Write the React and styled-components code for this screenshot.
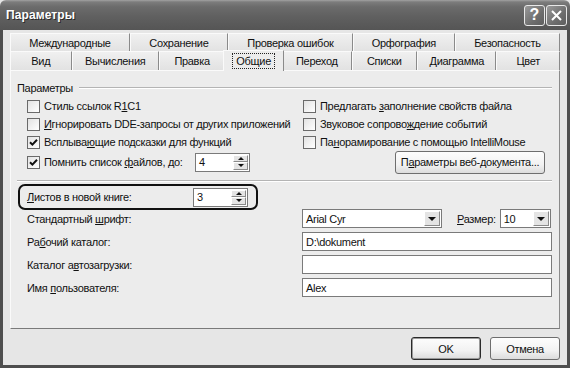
import React from 'react';
import styled, { createGlobalStyle } from 'styled-components';

const Global = createGlobalStyle`
  html, body { margin: 0; padding: 0; background: #e6e6e6; }
  body { font-family: "Liberation Sans", Arial, sans-serif; font-size: 11px; letter-spacing: -0.3px; color: #111; }
  #root { width: 570px; height: 368px; }
`;

const Window = styled.div`
  width: 570px;
  height: 368px;
  display: flex;
  flex-direction: column;
  background: #e6e6e6;
  overflow: hidden;
`;

const TitleBar = styled.div`
  height: 30px;
  flex: none;
  display: flex;
  align-items: center;
  justify-content: space-between;
  padding: 0 3px 0 6px;
  box-sizing: border-box;
  border-radius: 6px 6px 0 0;
  background: linear-gradient(#a2a2a2 0, #7c7c7c 2px, #6b6b6b 7px, #606060 55%, #555 100%);
`;

const Title = styled.div`
  color: #fff;
  font-weight: bold;
  font-size: 12px;
  letter-spacing: 0.1px;
  text-shadow: 1px 1px 0 #2a2a2a;
`;

const TitleButtons = styled.div`
  display: flex;
  gap: 1px;
`;

const TitleButton = styled.div`
  width: 21px;
  height: 21px;
  box-sizing: border-box;
  border: 1px solid #e8e8e8;
  border-radius: 3px;
  background: linear-gradient(135deg, #9a9a9a, #6e6e6e 60%, #5e5e5e);
  display: flex;
  align-items: center;
  justify-content: center;
  color: #fff;
  font-weight: bold;
  font-size: 16px;
  letter-spacing: 0;
`;

const Frame = styled.div`
  flex: 1;
  display: flex;
  flex-direction: column;
  border: 3px solid #4e4e4e;
  border-top: none;
  padding: 3px 7px 0 7px;
`;

const TabStrip = styled.div`
  display: flex;
  flex-direction: column;
`;

const TabRow = styled.div`
  display: flex;
  height: ${p => p.$h}px;
  align-items: flex-end;
  position: relative;
  z-index: ${p => (p.$front ? 2 : 1)};
`;

const Tab = styled.div`
  flex: ${p => p.$w} 1 0;
  height: ${p => (p.$active ? p.$h + 2 : p.$h)}px;
  margin: ${p => (p.$active ? '0 -2px -1px -2px' : '0')};
  box-sizing: border-box;
  display: flex;
  align-items: center;
  justify-content: center;
  border-top: 1px solid #fafafa;
  border-left: 1px solid #fafafa;
  border-right: 1px solid #8a8a8a;
  background: ${p => (p.$active ? '#ececec' : 'linear-gradient(#f0f0f0, #e2e2e2)')};
  white-space: nowrap;
  position: relative;
  z-index: ${p => (p.$active ? 3 : 1)};
`;

const TabLabel = styled.span`
  padding: 1px 3px;
  border: 1px dotted ${p => (p.$focus ? '#222' : 'transparent')};
`;

const Panel = styled.div`
  height: 259px;
  flex: none;
  box-sizing: border-box;
  border: 1px solid;
  border-color: #fafafa #8a8a8a #7a7a7a #fafafa;
  background: #ececec;
  display: flex;
  flex-direction: column;
  padding: 10px 7px 0 6px;
`;

const GroupHeader = styled.div`
  display: flex;
  align-items: center;
  height: 13px;
`;

const Rule = styled.div`
  flex: 1;
  height: 0;
  border-top: 1px solid #b4b4b4;
  border-bottom: 1px solid #fff;
  margin-left: ${p => p.$ml || 0}px;
`;

const CheckGrid = styled.div`
  display: grid;
  grid-template-columns: 276px 1fr;
  grid-template-rows: 18px 18px 18px 22px;
  margin-top: 3px;
  padding-left: 10px;
  align-items: center;
`;

const CheckItem = styled.label`
  display: flex;
  align-items: center;
  gap: 4px;
  white-space: nowrap;
`;

const Box = styled.span`
  width: 13px;
  height: 13px;
  box-sizing: border-box;
  border: 1px solid #6a6a6a;
  background: linear-gradient(135deg, #e2e2e2, #fff);
  display: inline-flex;
  align-items: center;
  justify-content: center;
  flex: none;
`;

const U = styled.span`
  text-decoration: underline;
`;

const SpinCell = styled.div`
  display: grid;
  grid-template-columns: ${p => p.$col}px 55px;
  align-items: center;
`;

const SpinWrap = styled.div`
  display: flex;
  width: 55px;
  height: 19px;
  box-sizing: border-box;
  border: 1px solid #7a7a7a;
  background: #fff;
`;

const SpinValue = styled.div`
  flex: 1;
  display: flex;
  align-items: center;
  padding-left: 3px;
`;

const SpinButtons = styled.div`
  width: 15px;
  display: flex;
  flex-direction: column;
  padding: 1px;
  box-sizing: content-box;
`;

const SpinBtn = styled.div`
  flex: 1;
  box-sizing: border-box;
  border: 1px solid;
  border-color: #fff #8a8a8a #8a8a8a #fff;
  background: #e4e4e4;
  display: flex;
  align-items: center;
  justify-content: center;
`;

const Arrow = styled.span`
  width: 0;
  height: 0;
  border-left: ${p => p.$s}px solid transparent;
  border-right: ${p => p.$s}px solid transparent;
  ${p => (p.$up ? `border-bottom: ${p.$s}px solid #111;` : `border-top: ${p.$s}px solid #111;`)}
`;

const PushButton = styled.div`
  width: ${p => p.$w}px;
  height: 23px;
  box-sizing: border-box;
  border: 1px solid ${p => (p.$default ? '#2a2a2a' : '#6e6e6e')};
  box-shadow: ${p => (p.$default ? 'inset 0 0 0 1px #9a9a9a' : 'none')};
  border-radius: 3px;
  background: linear-gradient(#fdfdfd, #f2f2f2 60%, #dcdcdc);
  display: flex;
  align-items: center;
  justify-content: center;
  white-space: nowrap;
`;

const WebButtonCell = styled.div`
  display: flex;
  padding-left: 92px;
`;

const Separator = styled.div`
  margin-top: 7px;
  height: 0;
  border-top: 1px solid #b4b4b4;
  border-bottom: 1px solid #fff;
`;

const HighlightRow = styled.div`
  margin: 2px 0 0 1px;
  width: 240px;
  height: 26px;
  box-sizing: border-box;
  border: 2px solid #111;
  border-radius: 7px;
  padding-left: 7px;
  display: flex;
  align-items: center;
`;

const FieldGrid = styled.div`
  display: grid;
  grid-template-columns: 275px 1fr;
  grid-auto-rows: 19px;
  row-gap: 4px;
  margin-top: -1px;
  padding-left: 10px;
  align-items: center;
`;

const FieldLabel = styled.div`
  white-space: nowrap;
`;

const TextBox = styled.div`
  width: ${p => (p.$w ? `${p.$w}px` : '100%')};
  height: 19px;
  box-sizing: border-box;
  border: 1px solid #7a7a7a;
  background: #fff;
  display: flex;
  align-items: center;
  padding-left: 3px;
`;

const ComboBox = styled.div`
  width: ${p => p.$w}px;
  height: 19px;
  box-sizing: border-box;
  border: 1px solid #7a7a7a;
  background: #fff;
  display: flex;
  align-items: stretch;
`;

const ComboValue = styled.div`
  flex: 1;
  display: flex;
  align-items: center;
  padding-left: 3px;
`;

const ComboBtn = styled.div`
  width: 16px;
  margin: 1px;
  box-sizing: border-box;
  border: 1px solid;
  border-color: #fff #8a8a8a #8a8a8a #fff;
  background: #e4e4e4;
  display: flex;
  align-items: center;
  justify-content: center;
`;

const FontRow = styled.div`
  display: flex;
  align-items: center;
`;

const SizeLabel = styled.span`
  margin: 0 4px 0 15px;
`;

const Footer = styled.div`
  display: flex;
  justify-content: flex-end;
  gap: 9px;
  padding-top: 8px;
`;

const Check = ({ checked }) => (
  <Box>
    {checked && (
      <svg width="9" height="9" viewBox="0 0 9 9">
        <path d="M1 4.2 L3.4 6.6 L8 1.8" fill="none" stroke="#111" strokeWidth="2" />
      </svg>
    )}
  </Box>
);

const CheckOption = ({ checked, children }) => (
  <CheckItem>
    <Check checked={checked} />
    <span>{children}</span>
  </CheckItem>
);

const Spinner = ({ value }) => (
  <SpinWrap>
    <SpinValue>{value}</SpinValue>
    <SpinButtons>
      <SpinBtn><Arrow $up $s={3} /></SpinBtn>
      <SpinBtn><Arrow $s={3} /></SpinBtn>
    </SpinButtons>
  </SpinWrap>
);

const Combo = ({ w, value }) => (
  <ComboBox $w={w}>
    <ComboValue>{value}</ComboValue>
    <ComboBtn><Arrow $s={4} /></ComboBtn>
  </ComboBox>
);

const row1 = [
  ['Международные', 120],
  ['Сохранение', 98],
  ['Проверка ошибок', 125],
  ['Орфография', 102],
  ['Безопасность', 105],
];
const row2 = [
  ['Вид', 61],
  ['Вычисления', 87],
  ['Правка', 66],
  ['Общие', 60, true],
  ['Переход', 69],
  ['Списки', 65],
  ['Диаграмма', 79],
  ['Цвет', 63],
];

export default function App() {
  return (
    <>
      <Global />
      <Window>
        <TitleBar>
          <Title>Параметры</Title>
          <TitleButtons>
            <TitleButton>?</TitleButton>
            <TitleButton>
              <svg width="11" height="11" viewBox="0 0 11 11">
                <path d="M1 1 L10 10 M10 1 L1 10" stroke="#fff" strokeWidth="2" />
              </svg>
            </TitleButton>
          </TitleButtons>
        </TitleBar>
        <Frame>
          <TabStrip>
            <TabRow $h={18}>
              {row1.map(([t, w]) => (
                <Tab key={t} $w={w} $h={18}><TabLabel>{t}</TabLabel></Tab>
              ))}
            </TabRow>
            <TabRow $h={19} $front>
              {row2.map(([t, w, a]) => (
                <Tab key={t} $w={w} $h={19} $active={a}><TabLabel $focus={a}>{t}</TabLabel></Tab>
              ))}
            </TabRow>
          </TabStrip>
          <Panel>
            <GroupHeader>
              <span>Параметры</span>
              <Rule $ml={6} />
            </GroupHeader>
            <CheckGrid>
              <CheckOption>Стиль ссылок R<U>1</U>C1</CheckOption>
              <CheckOption>Предлагать <U>з</U>аполнение свойств файла</CheckOption>
              <CheckOption><U>И</U>гнорировать DDE-запросы от других приложений</CheckOption>
              <CheckOption>Звуковое сопрово<U>ж</U>дение событий</CheckOption>
              <CheckOption checked>Всплыва<U>ю</U>щие подсказки для функций</CheckOption>
              <CheckOption>Па<U>н</U>орамирование с помощью IntelliMouse</CheckOption>
              <SpinCell $col={168}>
                <CheckOption checked>Помнить список <U>ф</U>айлов, до:</CheckOption>
                <Spinner value="4" />
              </SpinCell>
              <WebButtonCell>
                <PushButton $w={150}><span>П<U>а</U>раметры веб-документа...</span></PushButton>
              </WebButtonCell>
            </CheckGrid>
            <Separator />
            <HighlightRow>
              <SpinCell $col={166}>
                <FieldLabel><U>Л</U>истов в новой книге:</FieldLabel>
                <Spinner value="3" />
              </SpinCell>
            </HighlightRow>
            <FieldGrid>
              <FieldLabel>Стандартный <U>ш</U>рифт:</FieldLabel>
              <FontRow>
                <Combo w={140} value="Arial Cyr" />
                <SizeLabel><U>Р</U>азмер:</SizeLabel>
                <Combo w={51} value="10" />
              </FontRow>
              <FieldLabel>Ра<U>б</U>очий каталог:</FieldLabel>
              <TextBox>D:\dokument</TextBox>
              <FieldLabel>Каталог а<U>в</U>тозагрузки:</FieldLabel>
              <TextBox />
              <FieldLabel>Имя <U>п</U>ользователя:</FieldLabel>
              <TextBox>Alex</TextBox>
            </FieldGrid>
          </Panel>
          <Footer>
            <PushButton $w={70} $default>OK</PushButton>
            <PushButton $w={70}>Отмена</PushButton>
          </Footer>
        </Frame>
      </Window>
    </>
  );
}
